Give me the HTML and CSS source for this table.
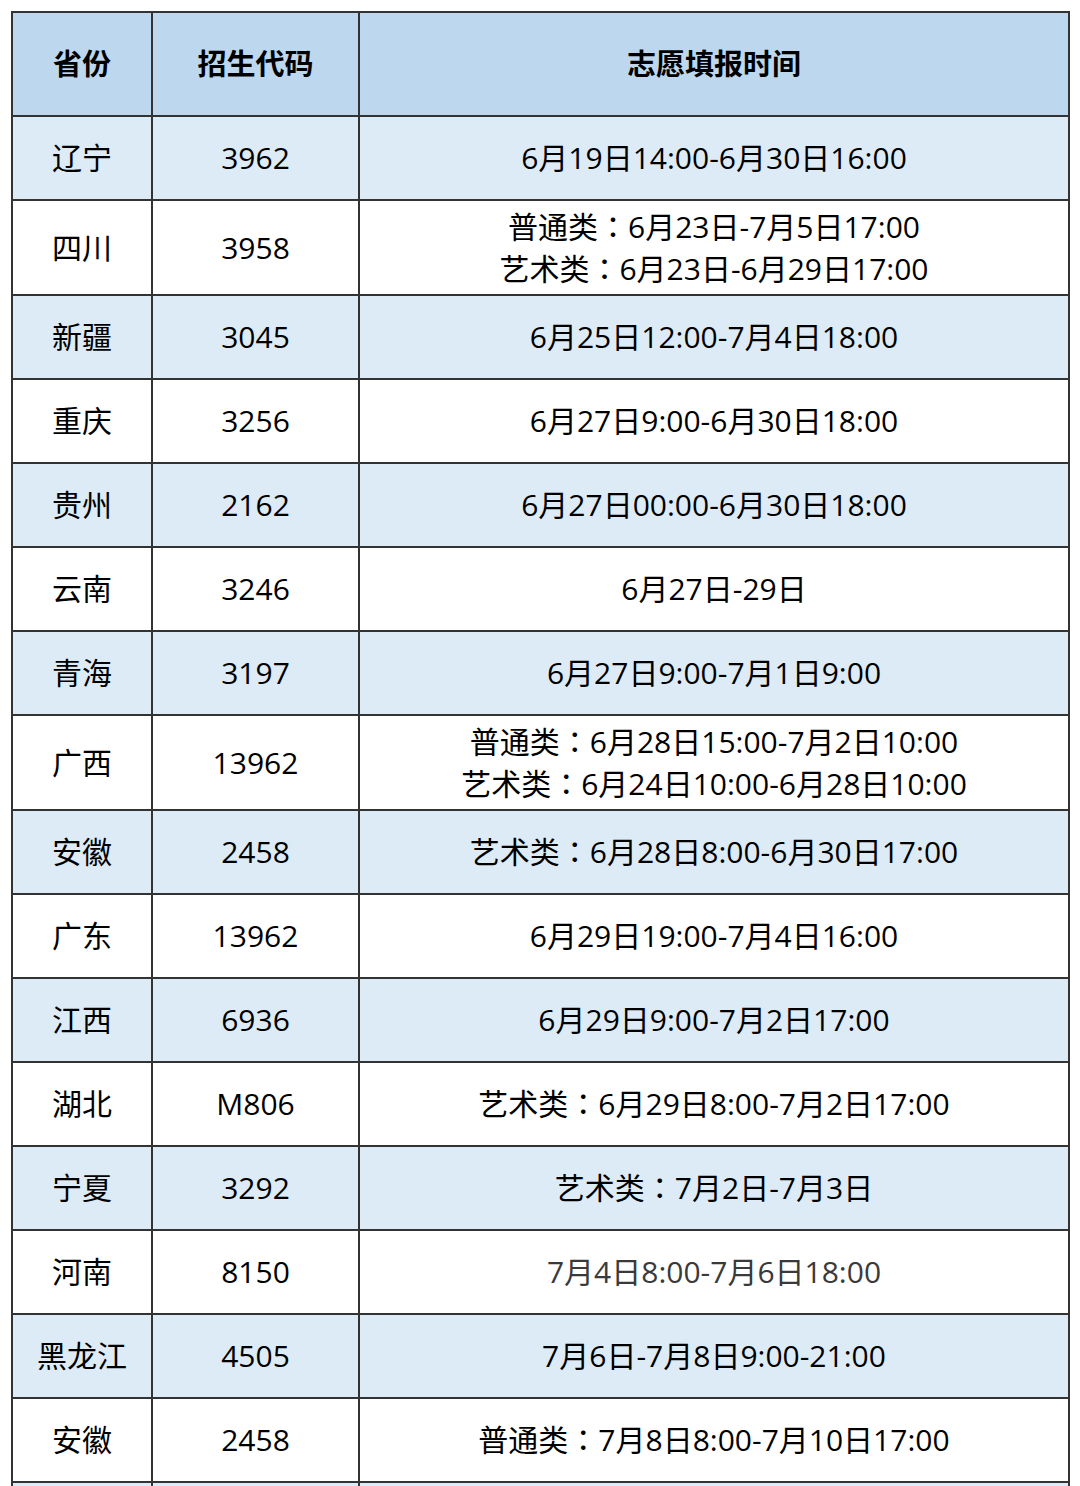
FILE: index.html
```html
<!DOCTYPE html>
<html lang="zh-CN">
<head>
<meta charset="utf-8">
<title>志愿填报时间</title>
<link rel="stylesheet" href="styles.css">
</head>
<body>
<table class="schedule">
  <colgroup>
    <col class="c-prov">
    <col class="c-code">
    <col class="c-time">
  </colgroup>
  <thead>
    <tr><th>省份</th><th>招生代码</th><th>志愿填报时间</th></tr>
  </thead>
  <tbody>
    <tr class="shade"><td>辽宁</td><td>3962</td><td>6月19日14:00-6月30日16:00</td></tr>
    <tr class="double"><td>四川</td><td>3958</td><td>普通类<span class="colon" lang="zh-TW">：</span>6月23日-7月5日17:00<br>艺术类<span class="colon" lang="zh-TW">：</span>6月23日-6月29日17:00</td></tr>
    <tr class="shade"><td>新疆</td><td>3045</td><td>6月25日12:00-7月4日18:00</td></tr>
    <tr><td>重庆</td><td>3256</td><td>6月27日9:00-6月30日18:00</td></tr>
    <tr class="shade"><td>贵州</td><td>2162</td><td>6月27日00:00-6月30日18:00</td></tr>
    <tr><td>云南</td><td>3246</td><td>6月27日-29日</td></tr>
    <tr class="shade"><td>青海</td><td>3197</td><td>6月27日9:00-7月1日9:00</td></tr>
    <tr class="double"><td>广西</td><td>13962</td><td>普通类<span class="colon" lang="zh-TW">：</span>6月28日15:00-7月2日10:00<br>艺术类<span class="colon" lang="zh-TW">：</span>6月24日10:00-6月28日10:00</td></tr>
    <tr class="shade"><td>安徽</td><td>2458</td><td>艺术类<span class="colon" lang="zh-TW">：</span>6月28日8:00-6月30日17:00</td></tr>
    <tr><td>广东</td><td>13962</td><td>6月29日19:00-7月4日16:00</td></tr>
    <tr class="shade"><td>江西</td><td>6936</td><td>6月29日9:00-7月2日17:00</td></tr>
    <tr><td>湖北</td><td>M806</td><td>艺术类<span class="colon" lang="zh-TW">：</span>6月29日8:00-7月2日17:00</td></tr>
    <tr class="shade"><td>宁夏</td><td>3292</td><td>艺术类<span class="colon" lang="zh-TW">：</span>7月2日-7月3日</td></tr>
    <tr><td>河南</td><td>8150</td><td class="muted">7月4日8:00-7月6日18:00</td></tr>
    <tr class="shade"><td>黑龙江</td><td>4505</td><td>7月6日-7月8日9:00-21:00</td></tr>
    <tr><td>安徽</td><td>2458</td><td>普通类<span class="colon" lang="zh-TW">：</span>7月8日8:00-7月10日17:00</td></tr>
    <tr class="shade"><td></td><td></td><td></td></tr>
  </tbody>
</table>
</body>
</html>
```
FILE: styles.css
```css
html, body {
  margin: 0;
  padding: 0;
  background: #ffffff;
}
body {
  padding: 11px 0 0 11px;
  font-family: "Open Sans", "Noto Sans CJK SC", sans-serif;
  color: #000000;
}
.schedule {
  border-collapse: collapse;
  table-layout: fixed;
  width: 1057px;
}
.c-prov { width: 140px; }
.c-code { width: 207px; }
.c-time { width: 710px; }
.schedule th,
.schedule td {
  border: 2px solid #333333;
  text-align: center;
  vertical-align: middle;
  font-size: 30px;
  line-height: 42px;
  padding: 20px 0;
  height: 42px;
}
.schedule th {
  background: #bdd7ee;
  font-weight: bold;
  font-size: 29px;
  padding: 30px 0;
}
.schedule tr.shade td {
  background: #ddebf7;
}
.schedule tr.double td {
  padding: 5px 0 4px;
  height: 84px;
}
.schedule td.muted {
  color: #3a3a3a;
}
.colon {
  font-family: "Noto Sans CJK TC", "Noto Sans CJK SC", sans-serif;
  line-height: 1;
}
```
